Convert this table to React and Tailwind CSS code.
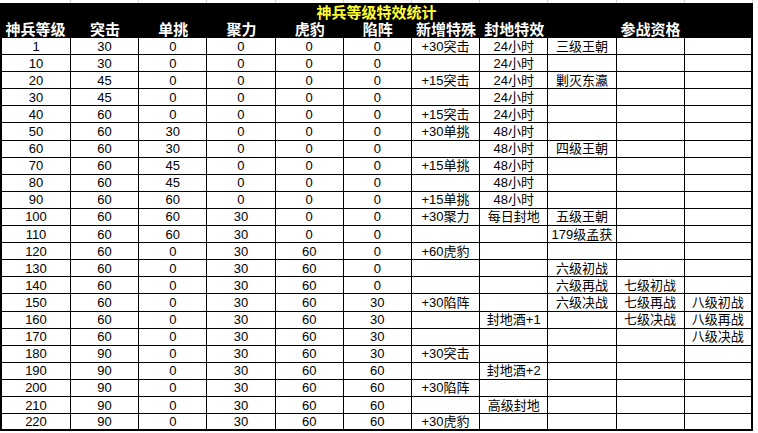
import React from "react";

const rows = [
  ["1", "30", "0", "0", "0", "0", "+30突击", "24小时", "三级王朝", "", ""],
  ["10", "30", "0", "0", "0", "0", "", "24小时", "", "", ""],
  ["20", "45", "0", "0", "0", "0", "+15突击", "24小时", "剿灭东瀛", "", ""],
  ["30", "45", "0", "0", "0", "0", "", "24小时", "", "", ""],
  ["40", "60", "0", "0", "0", "0", "+15突击", "24小时", "", "", ""],
  ["50", "60", "30", "0", "0", "0", "+30单挑", "48小时", "", "", ""],
  ["60", "60", "30", "0", "0", "0", "", "48小时", "四级王朝", "", ""],
  ["70", "60", "45", "0", "0", "0", "+15单挑", "48小时", "", "", ""],
  ["80", "60", "45", "0", "0", "0", "", "48小时", "", "", ""],
  ["90", "60", "60", "0", "0", "0", "+15单挑", "48小时", "", "", ""],
  ["100", "60", "60", "30", "0", "0", "+30聚力", "每日封地", "五级王朝", "", ""],
  ["110", "60", "60", "30", "0", "0", "", "", "179级孟获", "", ""],
  ["120", "60", "0", "30", "60", "0", "+60虎豹", "", "", "", ""],
  ["130", "60", "0", "30", "60", "0", "", "", "六级初战", "", ""],
  ["140", "60", "0", "30", "60", "0", "", "", "六级再战", "七级初战", ""],
  ["150", "60", "0", "30", "60", "30", "+30陷阵", "", "六级决战", "七级再战", "八级初战"],
  ["160", "60", "0", "30", "60", "30", "", "封地酒+1", "", "七级决战", "八级再战"],
  ["170", "60", "0", "30", "60", "30", "", "", "", "", "八级决战"],
  ["180", "90", "0", "30", "60", "30", "+30突击", "", "", "", ""],
  ["190", "90", "0", "30", "60", "60", "", "封地酒+2", "", "", ""],
  ["200", "90", "0", "30", "60", "60", "+30陷阵", "", "", "", ""],
  ["210", "90", "0", "30", "60", "60", "", "高级封地", "", "", ""],
  ["220", "90", "0", "30", "60", "60", "+30虎豹", "", "", "", ""],
];

const headers = ["神兵等级", "突击", "单挑", "聚力", "虎豹", "陷阵", "新增特殊", "封地特效", "", "参战资格", ""];

const cols = "grid grid-cols-[71px_repeat(10,68.2px)]";
const font = { fontFamily: '"Liberation Sans", "Noto Sans CJK SC", sans-serif' };

export default function App() {
  return (
    <div className="w-[758px] h-[433px] bg-white overflow-hidden" style={font}>
      <div className={`${cols} h-[3px]`}>
        {headers.map((_, i) => (
          <div key={i} className="border-r border-[#d4d4d4]" />
        ))}
      </div>
      <div className="w-[753px] bg-black">
        <div className="h-[18px] flex items-center justify-center text-[15px] font-bold leading-none text-[#ffff33]">
          神兵等级特效统计
        </div>
        <div className={`${cols} h-[17px]`}>
          {headers.map((h, i) => (
            <div
              key={i}
              className="flex items-center justify-center text-[15px] font-bold leading-none text-white whitespace-nowrap"
            >
              {h}
            </div>
          ))}
        </div>
      </div>
      <div className="w-[753px]">
        {rows.map((r, ri) => (
          <div
            key={ri}
            className={`${cols} h-[17.1px] ${ri === rows.length - 1 ? "border-b-2" : "border-b"} border-black`}
          >
            {r.map((c, ci) => (
              <div
                key={ci}
                className={`flex items-center justify-center whitespace-nowrap text-[13px] leading-none text-black border-black ${
                  ci === 0 ? "border-l-2 border-r" : ci === 10 ? "border-r-2" : "border-r"
                }`}
              >
                {c}
              </div>
            ))}
          </div>
        ))}
      </div>
    </div>
  );
}
